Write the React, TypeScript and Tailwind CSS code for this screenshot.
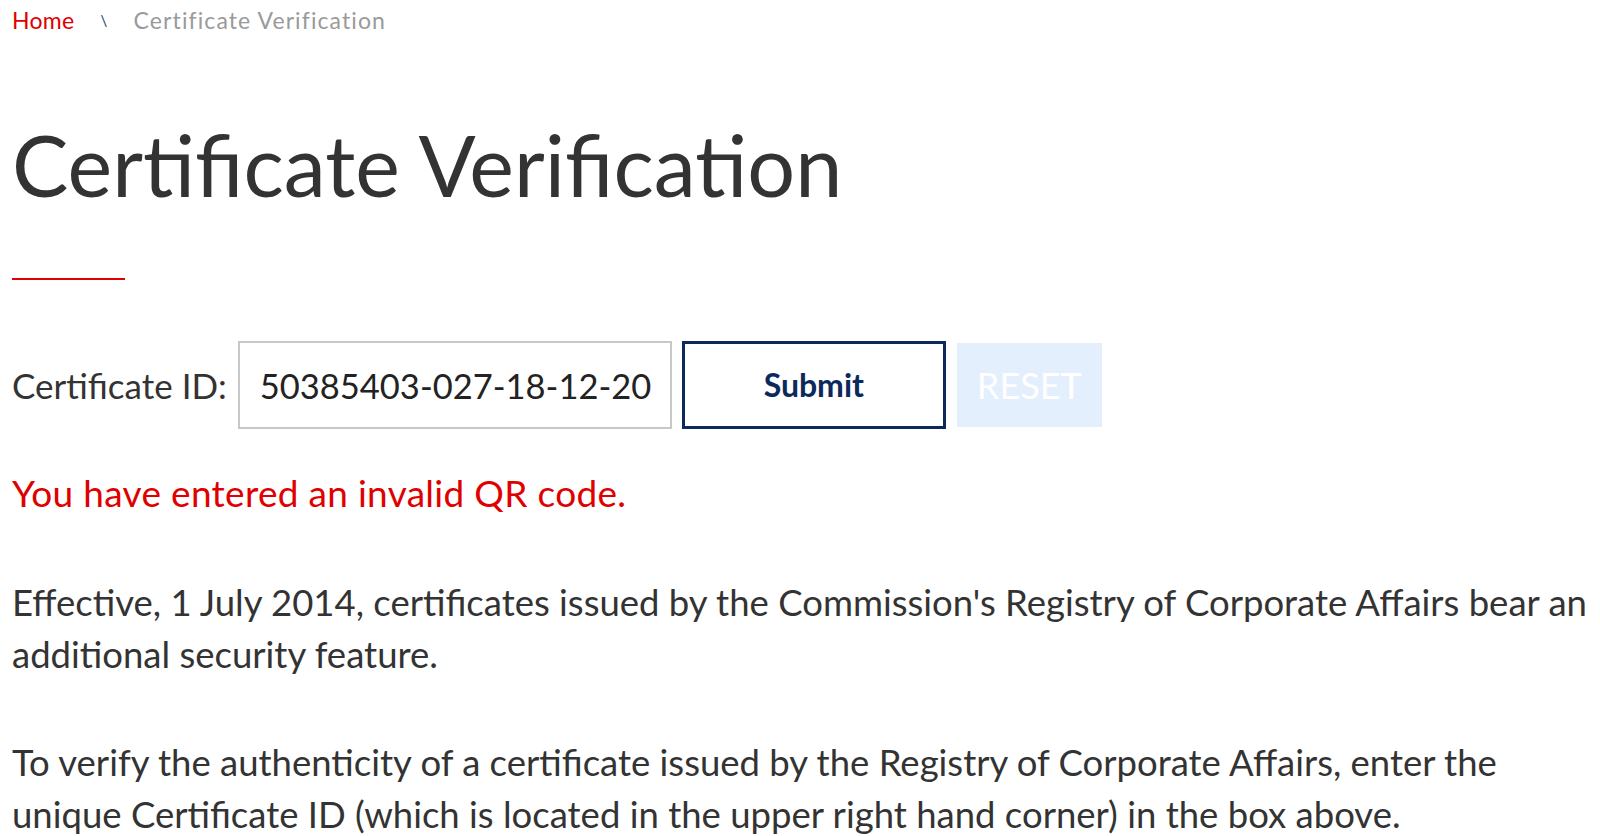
export default function App() {
  return (
    <div className="min-h-screen bg-white pl-3 pr-2 font-['Lato',sans-serif] text-[#333]">
      <nav className="flex items-center pt-[5px] text-[23px] leading-[30px] tracking-[0.3px]">
        <a href="#" className="text-[#e00000]">
          Home
        </a>
        <span className="ml-[26px] mr-[26px] text-[15px] text-[#1d3a66]">\</span>
        <span className="tracking-[1.1px] text-[#9a9a9a]">Certificate Verification</span>
      </nav>

      <h1 className="mt-[80px] text-[84.5px] leading-[100px] font-normal text-[#333]">
        Certificate Verification
      </h1>
      <div className="mt-[63px] h-[2px] w-[113px] bg-[#e00000]" />

      <form className="mt-[61px] flex items-center">
        <label className="text-[35px] text-[#333]">Certificate ID:</label>
        <input
          className="ml-[11px] h-[88px] w-[434px] border-2 border-[#c8c8c8] pl-5 pr-4 text-[34.5px] text-[#222] outline-none"
          defaultValue="50385403-027-18-12-20"
        />
        <button
          type="button"
          className="ml-[10px] h-[88px] w-[264px] border-[3px] border-[#0b2a5b] bg-white text-[32px] font-bold text-[#0b2a5b]"
        >
          Submit
        </button>
        <button
          type="button"
          className="ml-[11px] h-[84px] w-[145px] bg-[#e3effd] text-[36px] text-white"
        >
          RESET
        </button>
      </form>

      <p className="mt-[38px] text-[37px] leading-[52px] tracking-[0.3px] text-[#e00000]">
        You have entered an invalid QR code.
      </p>

      <p className="mt-[57px] text-[36.5px] leading-[52px] text-[#333]">
        Effective, 1 July 2014, certificates issued by the Commission's Registry of Corporate Affairs bear an additional security feature.
      </p>

      <p className="mt-[56px] text-[36.5px] leading-[52px] text-[#333]">
        To verify the authenticity of a certificate issued by the Registry of Corporate Affairs, enter the unique Certificate ID (which is located in the upper right hand corner) in the box above.
      </p>
    </div>
  );
}
